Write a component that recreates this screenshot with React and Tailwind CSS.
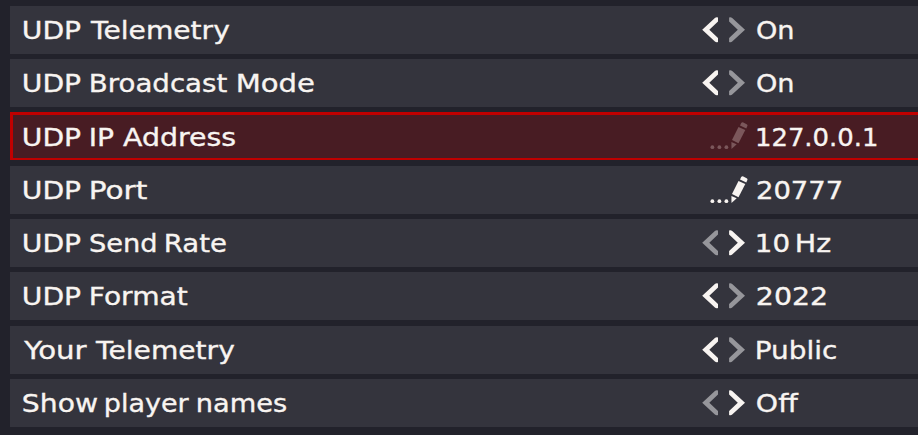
import React from "react";

const FONT = '25px "DejaVu Sans"';
const canvas = document.createElement("canvas").getContext("2d");

// Extended-width lettering: each word is stretched to its wide-face measure.
function Word({ text, width, gap = 0 }) {
  canvas.font = FONT;
  const m = canvas.measureText(text);
  const ink = m.actualBoundingBoxLeft + m.actualBoundingBoxRight;
  const scale = width / ink;
  return (
    <span className="block shrink-0 whitespace-pre" style={{ width, marginLeft: gap }}>
      <span
        className="block w-max origin-left"
        style={{ transform: `translateX(${m.actualBoundingBoxLeft * scale}px) scaleX(${scale})` }}
      >
        {text}
      </span>
    </span>
  );
}

function Words({ items }) {
  return (
    <span className="flex">
      {items.map(([text, width, gap], i) => (
        <Word key={i} text={text} width={width} gap={gap} />
      ))}
    </span>
  );
}

function Arrows({ active }) {
  const on = "fill-[#f8f4f1]";
  const off = "fill-[#96969b]";
  return (
    <svg width="50" height="48" viewBox="0 0 50 48" className="block shrink-0">
      <path className={active === "left" ? on : off} d="M2.2 23.8 14.9 12Q16.2 11 18 11.5V15.6L9.3 23.8 18 32V35.9Q16.2 36.6 14.9 35.5Z" />
      <path className={active === "right" ? on : off} d="M45 23.8 32.2 12Q30.9 11 29.1 11.5V15.6L37.8 23.8 29.1 32V35.9Q30.9 36.6 32.2 35.5Z" />
    </svg>
  );
}

function Edit({ dim }) {
  return (
    <svg width="50" height="48" viewBox="0 0 50 48" className={dim ? "block shrink-0 fill-[#7b575b]" : "block shrink-0 fill-[#f8f4f1]"}>
      <circle cx="12.4" cy="35.2" r="1.9" />
      <circle cx="19.4" cy="35.2" r="1.9" />
      <circle cx="26.4" cy="35.2" r="1.9" />
      <path d="M31.4 29.9 36.7 32.2 31.5 37Z" />
      <path d="M32 28.1 38.5 14.9 45.3 18.1 38.5 31.2Z" />
      <path d="M40 13.4 41.2 11.1Q42 10 43.3 10.5L46.7 12.2Q47.9 12.9 47.4 14.1L46.3 16.4Z" />
    </svg>
  );
}

const UDP = ["UDP", 57, 1.5];

const rows = [
  { label: [UDP, ["Telemetry", 140, 8.7]], control: "left", value: [["On", 35.5]] },
  { label: [UDP, ["Broadcast", 136.5, 10]], control: "left", value: [["On", 35.5]] },
  { label: [UDP, ["IP", 23, 10], ["Address", 112, 9.3]], control: "edit", selected: true, value: [["127.0.0.1", 119.5]] },
  { label: [UDP, ["Port", 56.5, 10]], control: "edit", value: [["20777", 84.2]] },
  { label: [UDP, ["Send", 65.5, 9.2], ["Rate", 60.5, 10.2]], control: "right", value: [["10", 32], ["Hz", 34, 8]] },
  { label: [UDP, ["Format", 97, 10]], control: "left", value: [["2022", 69]] },
  { label: [["Your", 64.5, 0], ["Telemetry", 140, 7.6]], control: "left", value: [["Public", 79.5]] },
  { label: [["Show", 74.5, 0.8], ["player", 83.5, 8.1], ["names", 88, 8.2]], control: "right", value: [["Off", 41.5]] },
];
rows[1].label.push(["Mode", 76.5, 9.9]);

const tops = ["mt-[6px]", "mt-[5px]", "mt-[5px]", "mt-[6px]", "mt-[5px]", "mt-[5px]", "mt-[6px]", "mt-[5px]"];

export default function App() {
  return (
    <div className="flex h-[435px] w-[918px] flex-col overflow-hidden bg-[#22222b] pl-[10px] font-['DejaVu_Sans',sans-serif] text-[25px] text-[#f8f4f1] [-webkit-text-stroke:0.35px_#f8f4f1]">
      {rows.map((row, i) => (
        <div
          key={i}
          className={`${tops[i]} flex h-[48px] shrink-0 ${
            row.selected
              ? "bg-[#481c23] leading-[52px] shadow-[inset_3px_0_0_#c00000,inset_0_3px_0_#c00000,inset_0_-2px_0_#c00000]"
              : "bg-[#34343d] leading-[50px]"
          }`}
        >
          <div className="w-[690px] shrink-0 pl-[12.7px]">
            <Words items={row.label} />
          </div>
          {row.control === "edit" ? <Edit dim={row.selected} /> : <Arrows active={row.control} />}
          <div className="pl-[7px]">
            <Words items={row.value} />
          </div>
        </div>
      ))}
    </div>
  );
}
